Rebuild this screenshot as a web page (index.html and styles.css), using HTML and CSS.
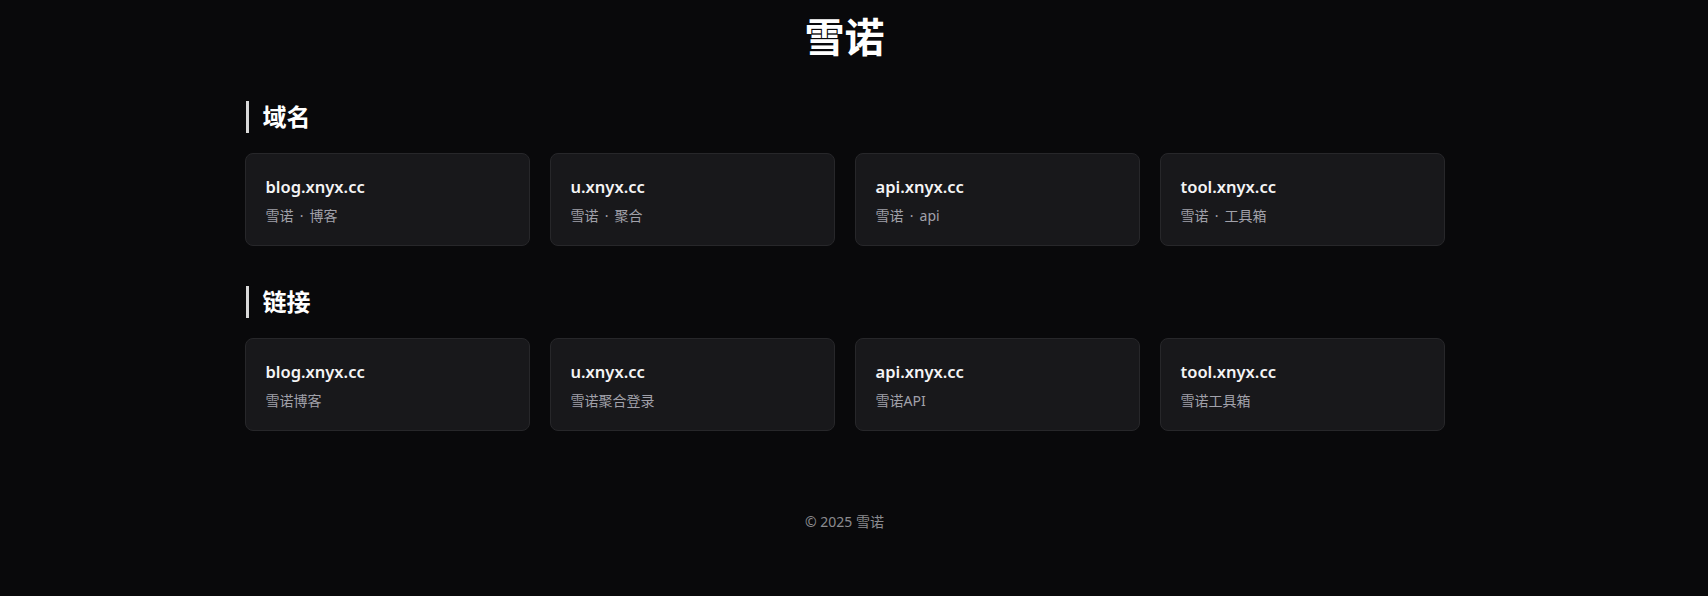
FILE: index.html
```html
<!DOCTYPE html>
<html lang="zh-CN">
<head>
<meta charset="utf-8">
<title>雪诺</title>
<link rel="stylesheet" href="styles.css">
</head>
<body>
<div class="page">
  <h1 class="site-title">雪诺</h1>

  <section class="section">
    <h2 class="section-title">域名</h2>
    <div class="grid">
      <a class="card" href="#"><div class="card-title">blog.xnyx.cc</div><div class="card-desc">雪诺 · 博客</div></a>
      <a class="card" href="#"><div class="card-title">u.xnyx.cc</div><div class="card-desc">雪诺 · 聚合</div></a>
      <a class="card" href="#"><div class="card-title">api.xnyx.cc</div><div class="card-desc">雪诺 · api</div></a>
      <a class="card" href="#"><div class="card-title">tool.xnyx.cc</div><div class="card-desc">雪诺 · 工具箱</div></a>
    </div>
  </section>

  <section class="section">
    <h2 class="section-title">链接</h2>
    <div class="grid">
      <a class="card" href="#"><div class="card-title">blog.xnyx.cc</div><div class="card-desc">雪诺博客</div></a>
      <a class="card" href="#"><div class="card-title">u.xnyx.cc</div><div class="card-desc">雪诺聚合登录</div></a>
      <a class="card" href="#"><div class="card-title">api.xnyx.cc</div><div class="card-desc">雪诺API</div></a>
      <a class="card" href="#"><div class="card-title">tool.xnyx.cc</div><div class="card-desc">雪诺工具箱</div></a>
    </div>
  </section>

  <footer class="footer">© 2025 雪诺</footer>
</div>
</body>
</html>
```

FILE: styles.css
```css
html, body {
  margin: 0;
  background: #09090b;
}
body {
  font-family: "Noto Sans", "Noto Sans CJK SC", sans-serif;
  color: #f4f4f5;
  padding: 12px 19px 0 0;
}
.page {
  width: 1200px;
  margin: 0 auto;
}
.site-title {
  margin: 0 0 40px;
  font-size: 40px;
  line-height: 49px;
  font-weight: 700;
  text-align: center;
  color: #ffffff;
}
.section {
  margin-bottom: 40px;
}
.section-title {
  margin: 0 0 20px 1px;
  font-size: 24px;
  line-height: 32px;
  font-weight: 700;
  color: #ffffff;
  border-left: 3px solid #d9d9d9;
  padding-left: 14px;
}
.grid {
  display: grid;
  grid-template-columns: repeat(4, 285px);
  gap: 20px;
}
.card {
  display: block;
  text-decoration: none;
  background: #18181b;
  border: 1px solid #27272a;
  border-radius: 8px;
  padding: 19px 20px;
}
.card-title {
  font-size: 16.5px;
  line-height: 27px;
  font-weight: 600;
  color: #f4f4f5;
  margin-bottom: 5px;
}
.card-desc {
  font-size: 14px;
  line-height: 21px;
  word-spacing: 2.5px;
  color: #a1a1aa;
}
.footer {
  padding-top: 40px;
  text-align: center;
  font-size: 14px;
  line-height: 21px;
  color: #8b8b8f;
}
```
